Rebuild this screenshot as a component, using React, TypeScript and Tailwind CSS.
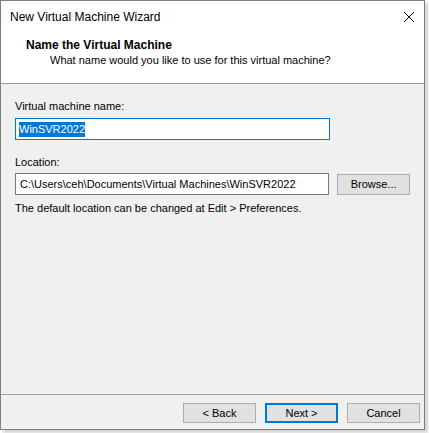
export default function App() {
  return (
    <div
      className="w-[429px] h-[433px] bg-white relative overflow-hidden"
      style={{ fontFamily: '"Liberation Sans", Arial, sans-serif' }}
    >
      <div className="w-[425px] h-[430px] border border-[#7f7f7f] flex flex-col bg-[#f0f0f0] shadow-[3px_3px_3px_rgba(0,0,0,0.18)]">
        {/* title bar + header */}
        <div className="bg-white border-b border-[#a0a0a0] h-[83px] flex flex-col">
          <div className="h-[32px] flex items-center justify-between pl-[9px] pr-[7px]">
            <span className="text-[12px] text-black">New Virtual Machine Wizard</span>
            <svg width="12" height="12" viewBox="0 0 12 12" className="mr-[2px]">
              <path d="M1 1 L11 11 M11 1 L1 11" stroke="#000" strokeWidth="1" />
            </svg>
          </div>
          <div className="pl-[25px] pt-[5px] leading-[15px]">
            <div className="font-bold text-black text-[12px]">Name the Virtual Machine</div>
            <div className="pl-[24px] text-black text-[11px]">What name would you like to use for this virtual machine?</div>
          </div>
        </div>

        {/* body */}
        <div className="flex-1 px-[14px] pt-[15px] text-[11px] text-black">
          <div className="leading-[15px]">Virtual machine name:</div>
          <div className="mt-[4px] w-[315px] h-[22px] border border-[#0078d7] bg-white flex items-center px-[3px]">
            <span className="bg-[#0078d7] text-white leading-[15px]">WinSVR2022</span>
          </div>
          <div className="mt-[15px] leading-[15px]">Location:</div>
          <div className="mt-[3px] flex items-center gap-[8px]">
            <div className="w-[315px] h-[22px] border border-[#7a7a7a] bg-white flex items-center px-[4px] whitespace-nowrap overflow-hidden">
              C:\Users\ceh\Documents\Virtual Machines\WinSVR2022
            </div>
            <button className="w-[73px] h-[21px] border border-[#adadad] bg-[#e1e1e1] text-[11px]">
              Browse...
            </button>
          </div>
          <div className="mt-[6px] leading-[15px]">The default location can be changed at Edit &gt; Preferences.</div>
        </div>

        {/* footer */}
        <div className="border-t border-[#a0a0a0] h-[35px] flex justify-end items-start pt-[8px] pr-[4px] gap-[9px] text-[11px]">
          <button className="w-[73px] h-[20px] border border-[#adadad] bg-[#e1e1e1]">&lt; Back</button>
          <button className="w-[73px] h-[20px] border-2 border-[#0078d7] bg-[#e1e1e1]">Next &gt;</button>
          <button className="w-[73px] h-[20px] border border-[#adadad] bg-[#e1e1e1]">Cancel</button>
        </div>
      </div>
    </div>
  );
}
